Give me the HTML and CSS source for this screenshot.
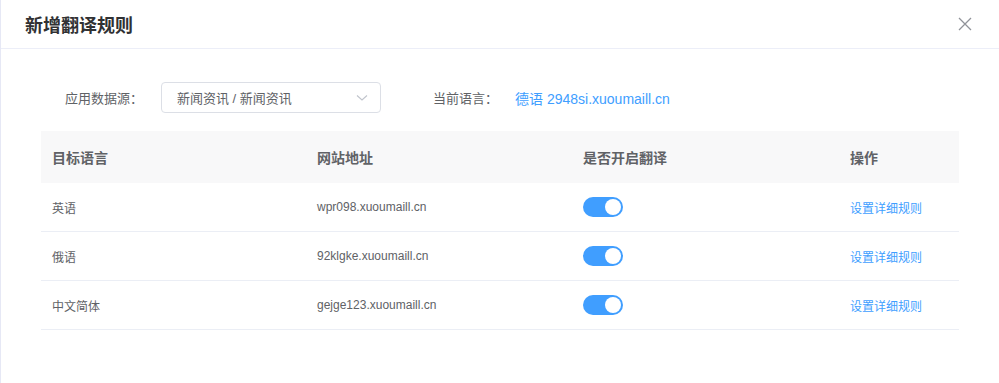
FILE: index.html
```html
<!DOCTYPE html>
<html lang="zh-CN">
<head>
    <meta charset="UTF-8">
    <title>新增翻译规则</title>
    <link rel="stylesheet" href="styles.css">
</head>
<body>
    <div class="dialog">
        <div class="dialog-header">
            <h2 class="dialog-title">新增翻译规则</h2>
            <button class="close-btn" aria-label="关闭">
                <svg width="14" height="14" viewBox="0 0 14 14">
                    <path d="M1 1 L13 13 M13 1 L1 13" stroke="#909399" stroke-width="1.3" fill="none"/>
                </svg>
            </button>
        </div>

        <div class="dialog-body">
            <div class="form-row">
                <label class="form-label">应用数据源：</label>
                <div class="select">
                    <span>新闻资讯 / 新闻资讯</span>
                    <svg class="select-arrow" width="12" height="8" viewBox="0 0 12 8">
                        <path d="M1 1.5 L6 6 L11 1.5" stroke="#c0c4cc" stroke-width="1.1" fill="none"/>
                    </svg>
                </div>
                <span class="current-label">当前语言：</span>
                <span class="current-value">德语 2948si.xuoumaill.cn</span>
            </div>

            <div class="table">
                <div class="table-row table-head">
                    <div class="cell">目标语言</div>
                    <div class="cell">网站地址</div>
                    <div class="cell">是否开启翻译</div>
                    <div class="cell">操作</div>
                </div>
                <div class="table-row">
                    <div class="cell">英语</div>
                    <div class="cell">wpr098.xuoumaill.cn</div>
                    <div class="cell"><span class="switch on"></span></div>
                    <div class="cell"><a class="link" href="#">设置详细规则</a></div>
                </div>
                <div class="table-row">
                    <div class="cell">俄语</div>
                    <div class="cell">92klgke.xuoumaill.cn</div>
                    <div class="cell"><span class="switch on"></span></div>
                    <div class="cell"><a class="link" href="#">设置详细规则</a></div>
                </div>
                <div class="table-row">
                    <div class="cell">中文简体</div>
                    <div class="cell">gejge123.xuoumaill.cn</div>
                    <div class="cell"><span class="switch on"></span></div>
                    <div class="cell"><a class="link" href="#">设置详细规则</a></div>
                </div>
            </div>
        </div>
    </div>
</body>
</html>
```

FILE: styles.css
```css
body {
    margin: 0;
    font-family: "Liberation Sans", "Noto Sans CJK SC", sans-serif;
    background-color: #fff;
    color: #606266;
}

.dialog {
    width: 998px;
    height: 383px;
    border-left: 1px solid #e6e8f5;
    background: #fff;
}

.dialog-header {
    display: flex;
    align-items: center;
    justify-content: space-between;
    height: 48px;
    padding: 0 27px 0 24px;
    border-bottom: 1px solid #eceef8;
}

.dialog-title {
    margin: 0;
    font-size: 18px;
    font-weight: bold;
    color: #303133;
}

.close-btn {
    border: none;
    background: none;
    padding: 0;
    width: 14px;
    height: 14px;
    cursor: pointer;
    display: flex;
}

.dialog-body {
    padding: 33px 40px 0 40px;
}

.form-row {
    display: flex;
    align-items: center;
    height: 31px;
    font-size: 13px;
}

.form-label {
    width: 96px;
    padding-left: 24px;
    color: #606266;
}

.select {
    display: flex;
    align-items: center;
    justify-content: space-between;
    box-sizing: border-box;
    width: 220px;
    height: 31px;
    padding: 0 12px 0 15px;
    border: 1px solid #dcdfe6;
    border-radius: 4px;
    color: #606266;
}

.current-label {
    margin-left: 52px;
    color: #606266;
}

.current-value {
    margin-left: 17px;
    font-size: 14px;
    color: #409eff;
}

.table {
    margin-top: 18px;
    width: 918px;
}

.table-row {
    display: grid;
    grid-template-columns: 265px 266px 267px 1fr;
    align-items: center;
    height: 48px;
    border-bottom: 1px solid #ebeef5;
    font-size: 12px;
    color: #606266;
}

.table-head {
    height: 52px;
    border-bottom: none;
    background: #f8f8f9;
    font-size: 14px;
    font-weight: bold;
    color: #606266;
}

.cell {
    padding-left: 11px;
    display: flex;
    align-items: center;
}

.switch {
    position: relative;
    display: inline-block;
    width: 40px;
    height: 20px;
    border-radius: 10px;
    background: #dcdfe6;
}

.switch::after {
    content: "";
    position: absolute;
    top: 2px;
    left: 2px;
    width: 16px;
    height: 16px;
    border-radius: 50%;
    background: #fff;
}

.switch.on {
    background: #409eff;
}

.switch.on::after {
    left: 22px;
}

.link {
    color: #409eff;
    text-decoration: none;
    font-size: 12px;
}
```
